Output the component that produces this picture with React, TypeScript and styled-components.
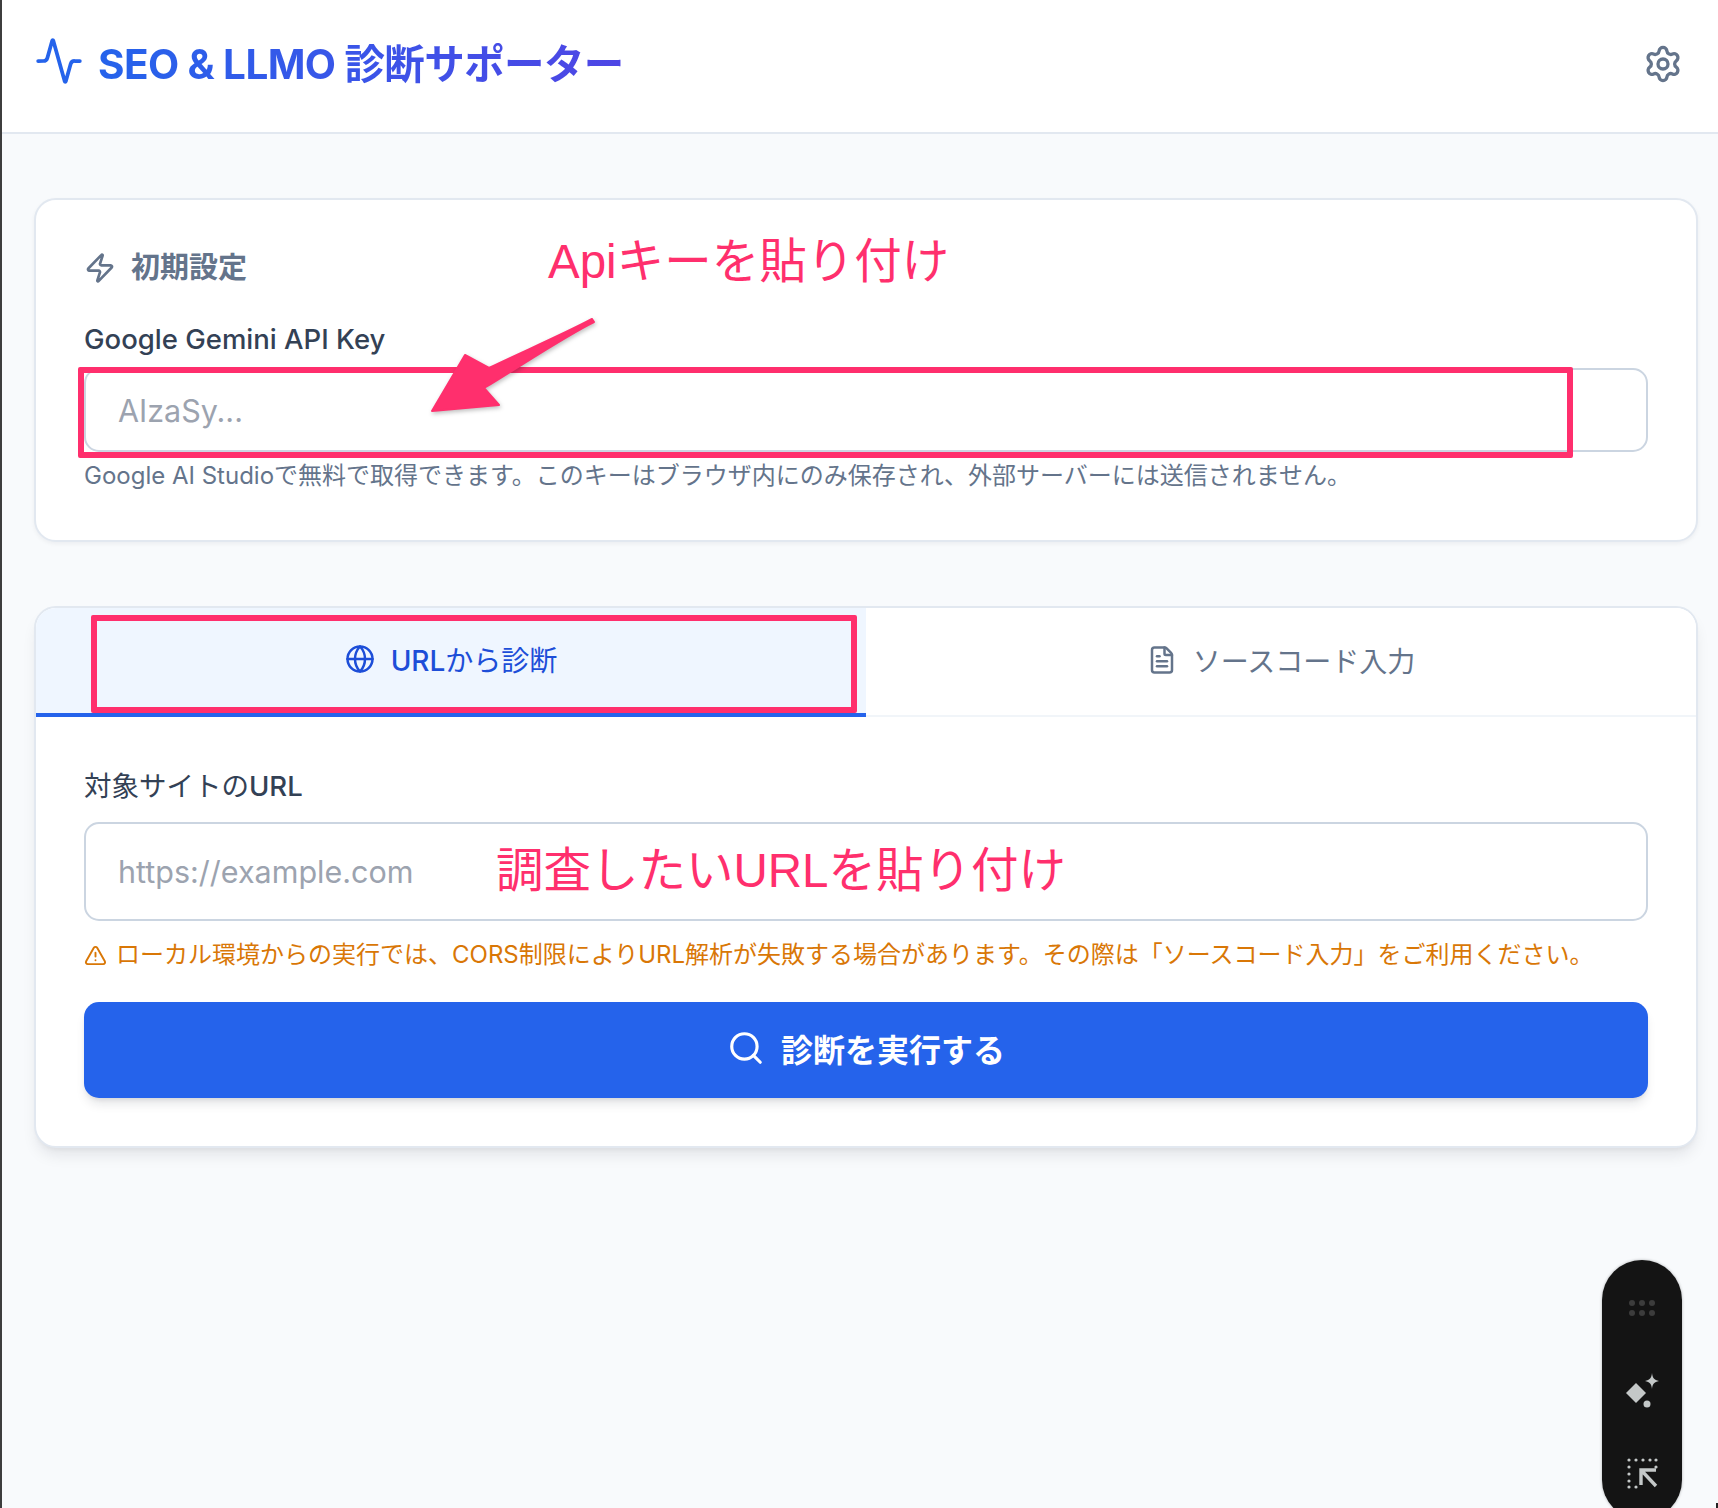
import styled, { createGlobalStyle } from 'styled-components';
import { Activity, FileText, Globe, Search, Settings, TriangleAlert, Zap } from 'lucide-react';

const GlobalStyle = createGlobalStyle`
	html, body {
		margin: 0;
		padding: 0;
		background: #f8fafc;
		font-family: Inter, 'Noto Sans CJK JP', sans-serif;
	}
	* {
		box-sizing: border-box;
	}
`;

const Page = styled.div`
	position: relative;
	width: 1718px;
	height: 1508px;
	overflow: hidden;
	border-left: 2px solid #3d3d3d;
	background: #f8fafc;
`;

const Header = styled.header`
	display: flex;
	align-items: center;
	justify-content: space-between;
	height: 134px;
	padding: 0 35px 10px 32px;
	background: #fff;
	border-bottom: 2px solid #e2e8f0;
`;

const Brand = styled.div`
	display: flex;
	align-items: center;
	gap: 14px;
	color: #2563eb;
`;

const Title = styled.h1`
	margin: 0;
	font-size: 40.5px;
	font-weight: 700;
	letter-spacing: -0.6px;
	background: linear-gradient(90deg, #2563eb, #4f46e5);
	-webkit-background-clip: text;
	background-clip: text;
	color: transparent;
`;

const IconButton = styled.button`
	display: flex;
	margin-top: 5px;
	padding: 0;
	border: 0;
	background: none;
	color: #64748b;
`;

const Main = styled.main`
	display: flex;
	flex-direction: column;
	gap: 64px;
	padding: 64px 20px 0 32px;
`;

const Card = styled.section<{ $raised?: boolean }>`
	background: #fff;
	border: 2px solid #e2e8f0;
	border-radius: 22px;
	overflow: hidden;
	box-shadow: ${(props) =>
		props.$raised
			? '0 10px 16px -4px rgba(15, 23, 42, 0.1), 0 4px 6px -4px rgba(15, 23, 42, 0.08)'
			: '0 2px 4px rgba(15, 23, 42, 0.05)'};
`;

const SetupBody = styled.div`
	padding: 48px 48px 46px;
`;

const SectionTitle = styled.h2`
	display: flex;
	align-items: center;
	gap: 15px;
	margin: 0 0 31px;
	font-size: 29px;
	line-height: 40px;
	font-weight: 700;
	color: #64748b;
`;

const Label = styled.label<{ $gap: number }>`
	display: block;
	margin-bottom: ${(props) => props.$gap}px;
	font-size: 27.5px;
	line-height: 40px;
	font-weight: 500;
	color: #334155;
`;

const LightText = styled.span`
	font-weight: 400;
`;

const Input = styled.input<{ $height: number }>`
	display: block;
	width: 100%;
	height: ${(props) => props.$height}px;
	padding: 0 32px;
	border: 2px solid #cbd5e1;
	border-radius: 15px;
	background: #fff;
	font-family: inherit;
	font-size: 30.5px;
	outline: none;
	&::placeholder {
		color: #9ca3af;
		opacity: 1;
	}
`;

const Hint = styled.p`
	margin: 6px 0 0;
	font-size: 24px;
	line-height: 36px;
	color: #64748b;
`;

const Tabs = styled.div`
	display: flex;
	border-bottom: 2px solid #f1f5f9;
`;

const Tab = styled.button<{ $active?: boolean }>`
	flex: 1;
	display: flex;
	align-items: center;
	justify-content: center;
	gap: 16px;
	height: ${(props) => (props.$active ? 109 : 107)}px;
	margin-bottom: ${(props) => (props.$active ? -2 : 0)}px;
	padding: 0 0 ${(props) => (props.$active ? 4 : 0)}px;
	border: 0;
	border-bottom: 4px solid ${(props) => (props.$active ? '#2563eb' : 'transparent')};
	background: ${(props) => (props.$active ? '#eff6ff' : '#fff')};
	color: ${(props) => (props.$active ? '#1d4ed8' : '#64748b')};
	font-family: inherit;
	font-size: 28px;
	font-weight: 500;
`;

const TabBody = styled.div`
	padding: 49px 48px 48px;
`;

const Warning = styled.p`
	display: flex;
	align-items: center;
	gap: 9px;
	margin: 16px 0 0;
	font-size: 24px;
	line-height: 36px;
	color: #d97706;
`;

const SubmitButton = styled.button`
	display: flex;
	align-items: center;
	justify-content: center;
	gap: 16px;
	width: 100%;
	height: 96px;
	margin-top: 29px;
	padding: 0 0 4px;
	border: 0;
	border-radius: 15px;
	background: #2563eb;
	color: #fff;
	font-family: inherit;
	font-size: 32px;
	font-weight: 700;
	box-shadow: 0 8px 12px -3px rgba(15, 23, 42, 0.12), 0 3px 5px -2px rgba(15, 23, 42, 0.1);
`;

const Callout = styled.div<{ $left: number; $top: number }>`
	position: absolute;
	left: ${(props) => props.$left}px;
	top: ${(props) => props.$top}px;
	font-family: 'Liberation Sans', 'Noto Sans CJK JP', sans-serif;
	font-size: 47.5px;
	line-height: 60px;
	white-space: nowrap;
	color: #ff2f6d;
`;

const Frame = styled.div<{ $left: number; $top: number; $width: number; $height: number }>`
	position: absolute;
	left: ${(props) => props.$left}px;
	top: ${(props) => props.$top}px;
	width: ${(props) => props.$width}px;
	height: ${(props) => props.$height}px;
	border: 6px solid #ff2f6d;
	border-radius: 2px;
`;

const ArrowMark = styled.svg`
	position: absolute;
	left: 0;
	top: 0;
	filter: drop-shadow(1px 2px 2px rgba(0, 0, 0, 0.25));
`;

const Dock = styled.div`
	position: absolute;
	left: 1600px;
	top: 1260px;
	width: 80px;
	height: 260px;
	display: flex;
	flex-direction: column;
	align-items: center;
	padding-top: 40px;
	border-radius: 40px;
	background: #141414;
	box-shadow: 0 0 3px rgba(0, 0, 0, 0.3);
`;

const DockGrip = styled.svg`
	margin-bottom: 55px;
`;

const DockIcon = styled.svg`
	margin-bottom: 48px;
`;

const CursorTip = styled.div`
	position: absolute;
	right: 0;
	bottom: 0;
	width: 2px;
	height: 5px;
	background: #222;
`;

export default function App() {
	return (
		<>
			<GlobalStyle />
			<Page>
				<Header>
					<Brand>
						<Activity size={50} strokeWidth={1.8} />
						<Title>SEO &amp; LLMO 診断サポーター</Title>
					</Brand>
					<IconButton>
						<Settings size={40} strokeWidth={2} />
					</IconButton>
				</Header>
				<Main>
					<Card>
						<SetupBody>
							<SectionTitle>
								<Zap size={32} strokeWidth={2} />
								初期設定
							</SectionTitle>
							<Label $gap={9}>Google Gemini API Key</Label>
							<Input $height={84} placeholder="AIzaSy..." />
							<Hint>Google AI Studioで無料で取得できます。このキーはブラウザ内にのみ保存され、外部サーバーには送信されません。</Hint>
						</SetupBody>
					</Card>
					<Card $raised>
						<Tabs>
							<Tab $active>
								<Globe size={30} strokeWidth={2} />
								<span>URL<LightText>から診断</LightText></span>
							</Tab>
							<Tab>
								<FileText size={30} strokeWidth={2} />
								<LightText>ソースコード入力</LightText>
							</Tab>
						</Tabs>
						<TabBody>
							<Label $gap={16}><LightText>対象サイトの</LightText>URL</Label>
							<Input $height={99} placeholder="https://example.com" />
							<Warning>
								<TriangleAlert size={23} strokeWidth={2} />
								ローカル環境からの実行では、CORS制限によりURL解析が失敗する場合があります。その際は「ソースコード入力」をご利用ください。
							</Warning>
							<SubmitButton>
								<Search size={38} strokeWidth={2} />
								診断を実行する
							</SubmitButton>
						</TabBody>
					</Card>
				</Main>

				<Frame $left={76} $top={367} $width={1495} $height={91} />
				<Frame $left={89} $top={615} $width={766} $height={98} />
				<ArrowMark width="640" height="430" viewBox="0 0 640 430">
					<path
						d="M590 319 C560 335 520 352 487 368 L463 355 L430 411 L497 405 L482 388 C520 365 565 335 592 322 Z"
						fill="#ff2f6d"
						stroke="#ff2f6d"
						strokeWidth="2"
						strokeLinejoin="round"
					/>
				</ArrowMark>
				<Callout $left={546} $top={232}>Apiキーを貼り付け</Callout>
				<Callout $left={494} $top={841}>調査したいURLを貼り付け</Callout>

				<Dock>
					<DockGrip width="26" height="16" viewBox="0 0 26 16">
						<g fill="#3c3c3c">
							<circle cx="3" cy="3" r="3" />
							<circle cx="13" cy="3" r="3" />
							<circle cx="23" cy="3" r="3" />
							<circle cx="3" cy="13" r="3" />
							<circle cx="13" cy="13" r="3" />
							<circle cx="23" cy="13" r="3" />
						</g>
					</DockGrip>
					<DockIcon width="36" height="38" viewBox="0 0 36 38">
						<g fill="#c4c8c8">
							<path d="M12 12 L22 22 L12 32 L2 22 Z" />
							<circle cx="23" cy="33" r="3.5" />
							<path d="M28 2 C28.6 7 30 9 35 10 C30 11 28.6 13 28 18 C27.4 13 26 11 21 10 C26 9 27.4 7 28 2 Z" />
						</g>
					</DockIcon>
					<svg width="32" height="32" viewBox="0 0 32 32">
						<g fill="#c4c8c8">
							<circle cx="3" cy="3" r="1.6" />
							<circle cx="10" cy="3" r="1.6" />
							<circle cx="17" cy="3" r="1.6" />
							<circle cx="24" cy="3" r="1.6" />
							<circle cx="30" cy="3" r="1.6" />
							<circle cx="3" cy="10" r="1.6" />
							<circle cx="30" cy="10" r="1.6" />
							<circle cx="3" cy="17" r="1.6" />
							<circle cx="3" cy="24" r="1.6" />
							<circle cx="3" cy="30" r="1.6" />
							<circle cx="10" cy="30" r="1.6" />
						</g>
						<path d="M30 13 H15 V28 M15 13 L30 29" fill="none" stroke="#c4c8c8" strokeWidth="3.4" />
					</svg>
				</Dock>
				<CursorTip />
			</Page>
		</>
	);
}
